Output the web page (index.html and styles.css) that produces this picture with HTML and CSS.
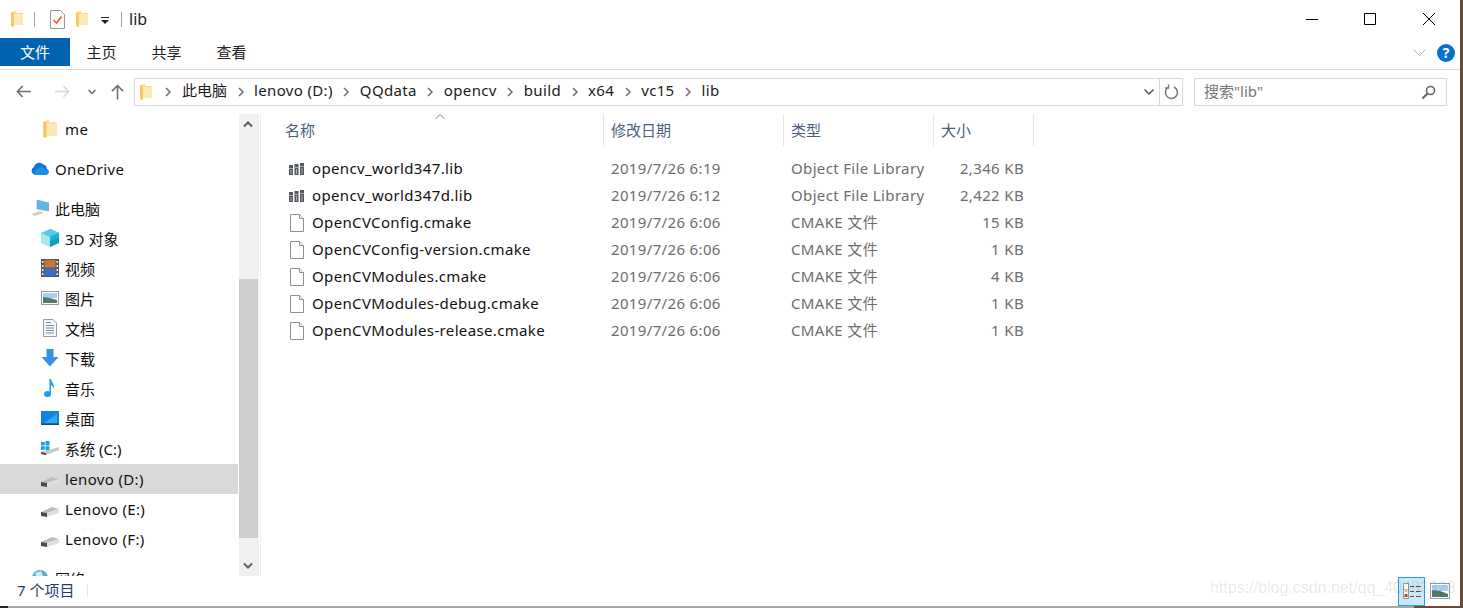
FILE: index.html
```html
<!DOCTYPE html>
<html lang="zh-CN">
<head>
  <meta charset="UTF-8">
  <title>lib</title>
  <link rel="stylesheet" href="styles.css">
</head>
<body>
  <svg class="icon-defs" width="0" height="0">
    <defs>
      <symbol id="i-folder" viewBox="0 0 12 16">
        <path d="M0 1 L5 0 L5 2 L12 2 L12 14 L3 14 L3 16 L0 15 Z" fill="#fbdc8e"/>
        <path d="M0 1 L3 2.500 L3 16 L0 15 Z" fill="#f5c964"/>
        <path d="M3 3 L12 3 L12 14 L3 14 Z" fill="#fde9b4"/>
      </symbol>
      <symbol id="i-drive" viewBox="0 -7 18 18">
        <path d="M0 5 L11 0 L18 2 L6 6 Z" fill="#bdbdbd"/>
        <path d="M6 6 L18 2 L18 6 L6 10 Z" fill="#dedede"/>
        <path d="M0 5 L6 6 L6 10 L0 9 Z" fill="#4a4a4a"/>
      </symbol>
      <symbol id="i-lib" viewBox="0 0 16 14">
        <path d="M0 3 H4 V13 H0 Z M5.500 2 H9.500 V13 H5.500 Z M11 1 H15 V13 H11 Z" fill="#55585c"/>
        <path d="M0 6 H4 V7 H0 Z M5.500 5 H9.500 V6 H5.500 Z M11 4 H15 V5 H11 Z M1.500 8 H2.500 V12 H1.500 Z M7 7 H8 V12 H7 Z M12.500 6 H13.500 V12 H12.500 Z" fill="#a9aeb3"/>
      </symbol>
      <symbol id="i-file" viewBox="0 0 14 18">
        <path d="M.5 .5 H9.500 L13.500 4.500 V17.500 H.5 Z" fill="#fff" stroke="#8f8f8f"/>
        <path d="M9.500 .5 V4.500 H13.500" fill="#f2f2f2" stroke="#8f8f8f"/>
      </symbol>
      <symbol id="i-chev" viewBox="0 0 8 12">
        <path d="M2 2 L6 6 L2 10" fill="none" stroke="#6e6e6e" stroke-width="1.500"/>
      </symbol>
    </defs>
  </svg>

  <div class="window">
    <header class="title-bar">
      <svg class="qa-folder"><use href="#i-folder"/></svg>
      <span class="qa-sep qa-sep-first"></span>
      <svg class="qa-check" viewBox="0 0 15 19">
        <path d="M.5 .5 H10.500 L14.500 4.500 V18.500 H.5 Z" fill="#fafafa" stroke="#9a9a9a"/>
        <path d="M3.500 10 L6.500 13 L11.500 6.500" fill="none" stroke="#e8602c" stroke-width="1.600"/>
      </svg>
      <svg class="qa-folder qa-folder-2"><use href="#i-folder"/></svg>
      <svg class="qa-drop" viewBox="0 0 8 7">
        <path d="M0 0 H8 V1 H0 Z M0 3 H8 L4 7 Z" fill="#222"/>
      </svg>
      <span class="qa-sep qa-sep-last"></span>
      <span class="title-text">lib</span>
      <div class="win-controls">
        <span class="win-btn"><svg width="14" height="14" viewBox="0 0 14 14"><path d="M1 7.500 H13" stroke="#000"/></svg></span>
        <span class="win-btn"><svg width="14" height="14" viewBox="0 0 14 14"><path d="M1.500 1.500 H12.500 V12.500 H1.500 Z" fill="none" stroke="#000"/></svg></span>
        <span class="win-btn"><svg width="14" height="14" viewBox="0 0 14 14"><path d="M1 1 L13 13 M13 1 L1 13" stroke="#000"/></svg></span>
      </div>
    </header>

    <nav class="ribbon">
      <span class="tab tab-file">文件</span>
      <span class="tab">主页</span>
      <span class="tab">共享</span>
      <span class="tab">查看</span>
      <div class="ribbon-right">
        <svg class="ribbon-collapse" viewBox="0 0 13 8"><path d="M.5 .5 L6.500 6.500 L12.500 .5" fill="none" stroke="#b4b4b4"/></svg>
        <span class="help">?</span>
      </div>
    </nav>

    <div class="address-row">
      <div class="nav-buttons">
        <svg class="nav-arrow" viewBox="0 0 16 14"><path d="M7 1 L1.500 7 L7 13 M1.500 7 H16" fill="none" stroke="#6d6d6d" stroke-width="1.700"/></svg>
        <svg class="nav-arrow nav-forward" viewBox="0 0 16 14"><path d="M9 1 L14.500 7 L9 13 M14.500 7 H0" fill="none" stroke="#d8d8d8" stroke-width="1.700"/></svg>
        <svg class="nav-down" viewBox="0 0 8 6"><path d="M.5 1 L4 4.500 L7.500 1" fill="none" stroke="#6d6d6d" stroke-width="1.500"/></svg>
        <svg class="nav-up" viewBox="0 0 14 16"><path d="M1 7 L7 1 L13 7 M7 1 V16" fill="none" stroke="#6d6d6d" stroke-width="1.700"/></svg>
      </div>
      <div class="address-box">
        <svg class="crumb-folder"><use href="#i-folder"/></svg>
        <svg class="crumb-chev"><use href="#i-chev"/></svg>
        <span class="crumb crumb-cjk">此电脑</span>
        <svg class="crumb-chev"><use href="#i-chev"/></svg>
        <span class="crumb">lenovo (D:)</span>
        <svg class="crumb-chev"><use href="#i-chev"/></svg>
        <span class="crumb">QQdata</span>
        <svg class="crumb-chev"><use href="#i-chev"/></svg>
        <span class="crumb">opencv</span>
        <svg class="crumb-chev"><use href="#i-chev"/></svg>
        <span class="crumb">build</span>
        <svg class="crumb-chev"><use href="#i-chev"/></svg>
        <span class="crumb">x64</span>
        <svg class="crumb-chev"><use href="#i-chev"/></svg>
        <span class="crumb">vc15</span>
        <svg class="crumb-chev"><use href="#i-chev"/></svg>
        <span class="crumb">lib</span>
        <svg class="address-drop" viewBox="0 0 10 6"><path d="M.5 .5 L5 5 L9.500 .5" fill="none" stroke="#555" stroke-width="1.500"/></svg>
        <span class="address-refresh">
          <svg width="15" height="16" viewBox="0 0 15 16"><path d="M10 3 A6 6 0 1 1 4.500 3.200 M4.500 .5 V4 H1" fill="none" stroke="#777" stroke-width="1.500"/></svg>
        </span>
      </div>
      <div class="search-box">
        <span class="search-text">搜索"lib"</span>
        <svg width="15" height="15" viewBox="0 0 15 15"><circle cx="9.500" cy="5.500" r="4" fill="none" stroke="#666" stroke-width="1.600"/><path d="M6.500 8.500 L1.500 13.500" stroke="#666" stroke-width="2.200"/></svg>
      </div>
    </div>

    <main class="main">
      <aside class="tree">
        <div class="tree-row tree-sub">
          <svg class="tree-icon"><use href="#i-folder"/></svg>
          <span>me</span>
        </div>
        <div class="tree-row tree-top tree-gap">
          <svg class="tree-icon" viewBox="1 2 16 12"><path d="M4 13 A3.500 3.500 0 0 1 3.500 6.500 A5 5 0 0 1 12 4 A4 4 0 0 1 15 8 A2.600 2.600 0 0 1 15 13 Z" fill="#0a78d4"/><path d="M5 13 A3 3 0 0 1 7 8 A4 4 0 0 1 14 9 A2 2 0 0 1 15 13 Z" fill="#1c8fe6"/></svg>
          <span>OneDrive</span>
        </div>
        <div class="tree-row tree-top tree-gap tree-cjk">
          <svg class="tree-icon" viewBox="0 0 18 16"><path d="M6 0 L18 3 V11 L6 9 Z" fill="#5db8f0" stroke="#8c9aa5" stroke-width=".6"/><path d="M0 14 L9 11 L13 13 L4 16 Z" fill="#cfcfcf"/></svg>
          <span>此电脑</span>
        </div>
        <div class="tree-row tree-sub tree-cjk">
          <svg class="tree-icon" viewBox="0 0 18 18"><path d="M9 0 L18 4 V14 L9 18 Z" fill="#0d9ec4"/><path d="M9 0 L0 4 V14 L9 18 Z" fill="#a6e6ee"/><path d="M0 4 L9 0 L18 4 L9 8 Z" fill="#52d0e2"/><path d="M9 8 L18 4 V9 L9 12 Z" fill="#1eb2d2"/></svg>
          <span>3D 对象</span>
        </div>
        <div class="tree-row tree-sub tree-cjk">
          <svg class="tree-icon" viewBox="0 0 18 18"><rect width="18" height="18" fill="#55585c"/><rect x="3.500" y="1" width="11" height="7.500" fill="#c8743a"/><rect x="3.500" y="9.500" width="11" height="7.500" fill="#3a6fc8"/><path d="M1 2 H2.500 V4 H1 Z M1 6 H2.500 V8 H1 Z M1 10 H2.500 V12 H1 Z M1 14 H2.500 V16 H1 Z M15.500 2 H17 V4 H15.500 Z M15.500 6 H17 V8 H15.500 Z M15.500 10 H17 V12 H15.500 Z M15.500 14 H17 V16 H15.500 Z" fill="#eee"/></svg>
          <span>视频</span>
        </div>
        <div class="tree-row tree-sub tree-cjk">
          <svg class="tree-icon" viewBox="0 0 18 14"><rect x=".5" y=".5" width="17" height="13" fill="#fff" stroke="#9a9a9a"/><rect x="2" y="2" width="14" height="5" fill="#a9d0ee"/><path d="M2 6 L9 7 L16 9 V12 H2 Z" fill="#4f7a66"/></svg>
          <span>图片</span>
        </div>
        <div class="tree-row tree-sub tree-cjk">
          <svg class="tree-icon" viewBox="0 0 18 18"><path d="M2.500 .5 H12 L15.500 4 V17.500 H2.500 Z" fill="#f6f8fa" stroke="#9a9a9a"/><path d="M5 3.500 H10 M5 6.500 H13 M5 9 H13 M5 11.500 H13 M5 14 H13" stroke="#6d8ca8"/></svg>
          <span>文档</span>
        </div>
        <div class="tree-row tree-sub tree-cjk">
          <svg class="tree-icon" viewBox="0 0 18 18"><path d="M5.500 0 H12.500 V8 H17.500 L9 17.500 L.5 8 H5.500 Z" fill="#3a8fe0"/></svg>
          <span>下载</span>
        </div>
        <div class="tree-row tree-sub tree-cjk">
          <svg class="tree-icon" viewBox="0 0 18 18"><ellipse cx="6.500" cy="15" rx="3.500" ry="3" fill="#1e9bf0"/><path d="M8.500 0 H10 C10.500 4 14 5 13 10 C12.500 7.500 11 6.500 10 6 V15 H8.500 Z" fill="#1e9bf0"/></svg>
          <span>音乐</span>
        </div>
        <div class="tree-row tree-sub tree-cjk">
          <svg class="tree-icon" viewBox="0 0 18 14"><rect width="18" height="13" fill="#0f86dc"/><path d="M3 12 L16 3 V12 Z" fill="#39a8ec"/><rect y="12.500" width="18" height="1.500" fill="#0b4f80"/></svg>
          <span>桌面</span>
        </div>
        <div class="tree-row tree-sub tree-cjk">
          <svg class="tree-icon" viewBox="0 0 18 14"><path d="M0 1 H3.800 V4.500 H0 Z M4.500 0 H8.500 V4.500 H4.500 Z M0 5.200 H3.800 V8.800 H0 Z M4.500 5.200 H8.500 V9.500 H4.500 Z" fill="#12a5ec"/><path d="M0 11 L8 9 L18 6 V9 L5 14 L0 13 Z" fill="#c8c8c8"/><path d="M0 11 L5 12 V14 L0 13 Z" fill="#4a4a4a"/></svg>
          <span>系统 (C:)</span>
        </div>
        <div class="tree-row tree-sub tree-selected">
          <svg class="tree-icon"><use href="#i-drive"/></svg>
          <span>lenovo (D:)</span>
        </div>
        <div class="tree-row tree-sub">
          <svg class="tree-icon"><use href="#i-drive"/></svg>
          <span>Lenovo (E:)</span>
        </div>
        <div class="tree-row tree-sub">
          <svg class="tree-icon"><use href="#i-drive"/></svg>
          <span>Lenovo (F:)</span>
        </div>
        <div class="tree-row tree-top tree-gap tree-cjk">
          <svg class="tree-icon" viewBox="0 0 18 18"><circle cx="9" cy="9" r="8" fill="#5fa8d8"/><path d="M4 4 L10 2 L12 7 L6 9 Z" fill="#d0e8f6"/></svg>
          <span>网络</span>
        </div>
      </aside>

      <div class="scrollbar">
        <span class="scroll-btn scroll-btn-up">
          <svg width="10" height="7" viewBox="0 0 10 7"><path d="M1 5.500 L5 1.500 L9 5.500" fill="none" stroke="#606060" stroke-width="2"/></svg>
        </span>
        <span class="scroll-thumb"></span>
        <span class="scroll-btn scroll-btn-down">
          <svg width="10" height="7" viewBox="0 0 10 7"><path d="M1 1.500 L5 5.500 L9 1.500" fill="none" stroke="#606060" stroke-width="2"/></svg>
        </span>
      </div>

      <section class="list">
        <div class="list-row list-head">
          <div class="head-cell head-name">名称
            <svg class="sort-mark" width="10" height="6" viewBox="0 0 10 6"><path d="M.5 5 L5 .5 L9.500 5" fill="none" stroke="#8a8a8a"/></svg>
          </div>
          <div class="head-cell">修改日期</div>
          <div class="head-cell">类型</div>
          <div class="head-cell">大小</div>
        </div>

        <div class="list-row file-row">
          <div class="file-name"><svg class="file-icon"><use href="#i-lib"/></svg>opencv_world347.lib</div>
          <div class="file-meta">2019/7/26 6:19</div>
          <div class="file-meta">Object File Library</div>
          <div class="file-meta file-size">2,346 KB</div>
        </div>
        <div class="list-row file-row">
          <div class="file-name"><svg class="file-icon"><use href="#i-lib"/></svg>opencv_world347d.lib</div>
          <div class="file-meta">2019/7/26 6:12</div>
          <div class="file-meta">Object File Library</div>
          <div class="file-meta file-size">2,422 KB</div>
        </div>
        <div class="list-row file-row">
          <div class="file-name"><svg class="file-icon"><use href="#i-file"/></svg>OpenCVConfig.cmake</div>
          <div class="file-meta">2019/7/26 6:06</div>
          <div class="file-meta">CMAKE 文件</div>
          <div class="file-meta file-size">15 KB</div>
        </div>
        <div class="list-row file-row">
          <div class="file-name"><svg class="file-icon"><use href="#i-file"/></svg>OpenCVConfig-version.cmake</div>
          <div class="file-meta">2019/7/26 6:06</div>
          <div class="file-meta">CMAKE 文件</div>
          <div class="file-meta file-size">1 KB</div>
        </div>
        <div class="list-row file-row">
          <div class="file-name"><svg class="file-icon"><use href="#i-file"/></svg>OpenCVModules.cmake</div>
          <div class="file-meta">2019/7/26 6:06</div>
          <div class="file-meta">CMAKE 文件</div>
          <div class="file-meta file-size">4 KB</div>
        </div>
        <div class="list-row file-row">
          <div class="file-name"><svg class="file-icon"><use href="#i-file"/></svg>OpenCVModules-debug.cmake</div>
          <div class="file-meta">2019/7/26 6:06</div>
          <div class="file-meta">CMAKE 文件</div>
          <div class="file-meta file-size">1 KB</div>
        </div>
        <div class="list-row file-row">
          <div class="file-name"><svg class="file-icon"><use href="#i-file"/></svg>OpenCVModules-release.cmake</div>
          <div class="file-meta">2019/7/26 6:06</div>
          <div class="file-meta">CMAKE 文件</div>
          <div class="file-meta file-size">1 KB</div>
        </div>
      </section>
    </main>

    <footer class="status-bar">
      <span class="status-count">7 个项目</span>
      <span class="status-sep"></span>
      <div class="view-buttons">
        <span class="view-btn view-btn-on">
          <svg width="18" height="16" viewBox="0 0 18 16"><rect x=".5" y=".5" width="5" height="15" fill="#fff" stroke="#9a9a9a"/><rect x="1.500" y="11" width="3" height="3" fill="#c03a20"/><rect x="1.500" y="6" width="3" height="3" fill="#d8c080"/><path d="M7 3.500 H11 M13 3.500 H18 M7 8.500 H11 M13 8.500 H18 M7 13.500 H11 M13 13.500 H18" stroke="#555"/></svg>
        </span>
        <span class="view-btn view-btn-thumb">
          <svg width="20" height="16" viewBox="0 0 20 16"><rect x=".5" y=".5" width="19" height="15" fill="#fff" stroke="#9a9a9a"/><rect x="2" y="2" width="16" height="6" fill="#a9d0ee"/><path d="M2 7 L10 8 L18 11 V14 H2 Z" fill="#4f7a66"/></svg>
        </span>
      </div>
      <span class="watermark">https://blog.csdn.net/qq_40483328</span>
    </footer>
  </div>
  <div class="bottom-edge"></div>
</body>
</html>
```

FILE: styles.css
```css
* {
  box-sizing: border-box;
  margin: 0;
  padding: 0;
}

html, body {
  width: 1463px;
  height: 608px;
  overflow: hidden;
}

body {
  font-family: "Noto Sans", "Noto Sans CJK SC", sans-serif;
  font-size: 15px;
  color: #111;
  background: #6b4a34;
}

.icon-defs {
  position: absolute;
}

.window {
  width: 1460px;
  height: 606px;
  background: #fff;
  display: flex;
  flex-direction: column;
}

/* title bar */
.title-bar {
  height: 38px;
  display: flex;
  align-items: center;
}

.qa-folder {
  width: 12px;
  height: 16px;
  margin-left: 11px;
}

.qa-sep {
  width: 1px;
  height: 15px;
  background: #a0a0a0;
}

.qa-sep-first {
  margin-left: 11px;
}

.qa-check {
  width: 15px;
  height: 19px;
  margin-left: 15px;
}

.qa-folder-2 {
  margin-left: 11px;
}

.qa-drop {
  width: 8px;
  height: 7px;
  margin-left: 13px;
  margin-top: 3px;
}

.qa-sep-last {
  margin-left: 12px;
}

.title-text {
  margin-left: 7px;
  font-size: 16px;
  color: #222;
}

.win-controls {
  margin-left: auto;
  padding-right: 2px;
  display: flex;
}

.win-btn {
  width: 58.500px;
  height: 38px;
  display: flex;
  align-items: center;
  justify-content: center;
  padding-bottom: 1px;
}

/* ribbon */
.ribbon {
  height: 32px;
  display: flex;
  align-items: flex-start;
  border-bottom: 1px solid #dadada;
}

.tab {
  height: 28px;
  width: 65px;
  display: flex;
  align-items: center;
  justify-content: center;
  padding: 0 2px 2px 0;
  color: #222;
}

.tab-file {
  width: 70px;
  padding-right: 0;
  background: #0063b1;
  color: #fff;
}

.ribbon-right {
  margin-left: auto;
  display: flex;
  align-items: center;
  gap: 11px;
  padding: 6px 5px 0 0;
}

.ribbon-collapse {
  width: 13px;
  height: 8px;
}

.help {
  width: 18px;
  height: 18px;
  border-radius: 50%;
  background: #0a70d0;
  color: #fff;
  font-size: 14px;
  font-weight: 700;
  line-height: 18px;
  text-align: center;
}

/* address row */
.address-row {
  height: 42px;
  display: flex;
  align-items: center;
  padding-top: 2px;
}

.nav-buttons {
  width: 134px;
  display: flex;
  align-items: center;
  padding-left: 16px;
  padding-bottom: 1px;
}

.nav-arrow {
  width: 15px;
  height: 13px;
}

.nav-forward {
  margin-left: 24px;
}

.nav-down {
  width: 8px;
  height: 6px;
  margin-left: 18px;
}

.nav-up {
  width: 13px;
  height: 16px;
  margin-left: 15px;
}

.address-box {
  width: 1049px;
  height: 28px;
  border: 1px solid #d9d9d9;
  display: flex;
  align-items: center;
  padding-left: 5px;
}

.crumb-folder {
  width: 12px;
  height: 16px;
}

.crumb-chev {
  width: 8px;
  height: 12px;
  margin: 0 9.500px;
}

.crumb-folder + .crumb-chev {
  margin: 0 10px 0 12px;
}

.crumb {
  color: #1a1a1a;
  letter-spacing: .35px;
  padding-bottom: 5px;
}

.crumb-cjk {
  letter-spacing: 0;
}

.address-drop {
  width: 10px;
  height: 6px;
  margin-left: auto;
  margin-right: 5px;
}

.address-refresh {
  width: 23px;
  height: 26px;
  border-left: 1px solid #d9d9d9;
  display: flex;
  align-items: center;
  justify-content: center;
}

.search-box {
  width: 253px;
  height: 28px;
  margin-left: 11px;
  border: 1px solid #d9d9d9;
  display: flex;
  align-items: center;
  justify-content: space-between;
  padding: 0 10px 0 9px;
  color: #777;
}

.search-text {
  padding-bottom: 3px;
}

/* main area */
.main {
  height: 464px;
  display: flex;
  overflow: hidden;
}

.tree {
  width: 239px;
  padding-top: 2px;
  overflow: hidden;
  flex-shrink: 0;
}

.tree-row {
  height: 30px;
  display: flex;
  align-items: center;
  gap: 6px;
  width: 238px;
  letter-spacing: .35px;
}

.tree-cjk {
  letter-spacing: 0;
  padding-bottom: 2px;
}

.tree-sub {
  padding-left: 41px;
}

.tree-top {
  padding-left: 31px;
}

.tree-gap {
  margin-top: 10px;
}

.tree-selected {
  background: #d9d9d9;
}

.tree-icon {
  width: 18px;
  height: 18px;
  flex-shrink: 0;
}

.scrollbar {
  width: 20px;
  margin-top: 2px;
  background: #f0f0f0;
  display: flex;
  flex-direction: column;
  flex-shrink: 0;
}

.scroll-btn {
  height: 38px;
  display: flex;
  justify-content: center;
  padding-right: 2px;
}

.scroll-btn-up {
  height: 165px;
  align-items: flex-start;
  padding-top: 7px;
}

.scroll-btn-down {
  align-items: flex-end;
  padding-bottom: 7px;
}

.scroll-thumb {
  height: 259px;
  width: 19px;
  background: #cdcdcd;
}

.list {
  width: 1100px;
  margin-left: 1px;
  padding: 2px 0 0 17px;
  border-left: 1px solid #f0f0f0;
}

.list-row {
  display: grid;
  grid-template-columns: 326px 180px 150px 100px;
}

.list-head {
  height: 32px;
  margin-bottom: 9px;
}

.head-cell {
  display: flex;
  align-items: center;
  padding: 0 0 2px 7px;
  color: #4c607a;
  border-right: 1px solid #e5e5e5;
  position: relative;
}

.sort-mark {
  position: absolute;
  left: 157px;
  top: 0;
}

.file-row {
  height: 27px;
  align-items: center;
  letter-spacing: .35px;
}

.file-name {
  display: flex;
  align-items: center;
  padding-left: 11px;
  color: #111;
  padding-bottom: 2px;
}

.file-icon {
  width: 16px;
  height: 18px;
  margin-right: 7px;
  margin-bottom: -2px;
}

.file-meta {
  padding-left: 7px;
  padding-bottom: 2px;
  color: #6d6d6d;
}

.file-size {
  padding-right: 10px;
  text-align: right;
}

/* status bar */
.status-bar {
  height: 30px;
  display: flex;
  align-items: center;
  padding-left: 17px;
  position: relative;
  color: #1f3f6f;
}

.status-count {
  padding-bottom: 3px;
}

.status-sep {
  width: 1px;
  height: 13px;
  background: #e8e8e8;
  position: absolute;
  left: 87px;
  top: 8px;
}

.view-buttons {
  margin-left: auto;
  display: flex;
  align-items: center;
  gap: 3px;
  padding-right: 8px;
}

.view-btn {
  width: 27px;
  height: 29px;
  display: flex;
  align-items: center;
  justify-content: center;
}

.view-btn-thumb {
  width: 24px;
}

.view-btn-on {
  background: #cce8f7;
  border: 1px solid #26a0da;
}

.watermark {
  position: absolute;
  left: 1210px;
  top: 3px;
  font-family: "Liberation Sans", sans-serif;
  font-size: 16px;
  color: rgba(0, 0, 0, 0.1);
  white-space: nowrap;
}

.bottom-edge {
  height: 2px;
  background: linear-gradient(to right, #2a211c 0, #2a211c 8px, #a8a8a8 8px, #a8a8a8 1414px, #6b4a34 1414px);
}
```
